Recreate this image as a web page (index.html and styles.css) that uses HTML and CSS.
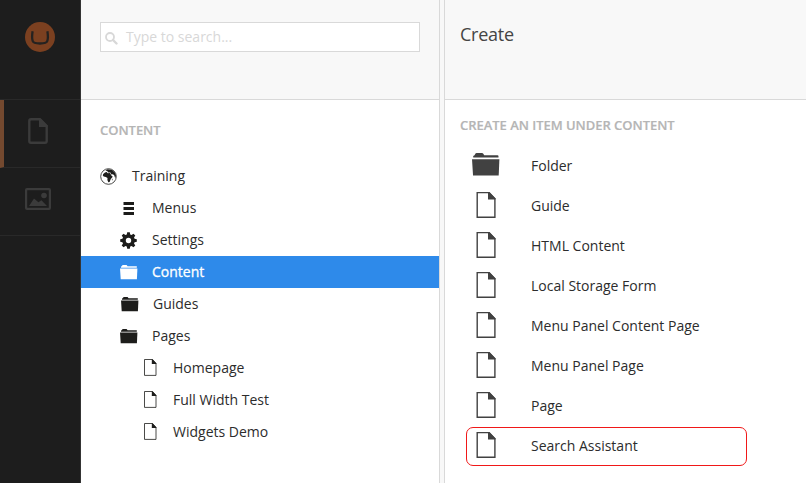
FILE: index.html
```html
<!DOCTYPE html>
<html lang="en">
<head>
<meta charset="utf-8">
<title>Content</title>
<link rel="stylesheet" href="styles.css">
</head>
<body>
<svg class="defs" aria-hidden="true">
  <symbol id="doc-large" viewBox="0 0 20 26"><path d="M1.2.6H12.8L18.9 6.7V25.3H1.2Z" fill="none" stroke="currentColor" stroke-width="1.4"/><path d="M12 0h1.5L19.4 6.2V7.5H12Z" fill="currentColor"/></symbol>
  <symbol id="doc-small" viewBox="0 0 13 17"><path d="M.5.5H8.4L12 4.4V16.4H.5Z" fill="none" stroke="currentColor" stroke-width=".8"/><path d="M7.8.2H8.6L12.3 4.2V5H7.8Z" fill="currentColor"/></symbol>
  <symbol id="folder" viewBox="0 0 28 23"><path d="M1.2 4.5V3L2.5 2.2 3.5.5Q3.8 0 4.5 0H10Q10.8 0 11.1.5L12.2 2.3H25.5Q26.5 2.3 26.5 3.5V4.5Z"/><path d="M0 6.3H27.4L26.7 22.6H1Z"/></symbol>
  <symbol id="folder-small" viewBox="0 0 18 15"><path d="M1 2.7V1.7L1.8 1 2.4.3Q2.7 0 3 0H6.6L7.6 1.2H16.8V2.7Z"/><path d="M0 3.6H17.4L16.9 14.3H.7Z"/></symbol>
</svg>
<div class="app">
  <nav class="rail">
    <div class="rail-logo">
      <svg width="30" height="30" viewBox="0 0 30 30"><circle cx="15" cy="15" r="15" fill="#7b4020"/><path d="M7.6 9.2C6.9 13.5 7 17 7.7 19C8.4 21.2 10.5 21.5 15 21.5S21.6 21.2 22.3 19C23 17 23.1 13.5 22.4 9.2" fill="none" stroke="#252220" stroke-width="2.3"/></svg>
    </div>
    <a class="rail-item rail-item-active">
      <svg width="20" height="26" viewBox="0 0 20 26"><path d="M3 1.3H12L18.7 8V23Q18.7 24.7 17 24.7H3Q1.3 24.7 1.3 23V3Q1.3 1.3 3 1.3Z" fill="none" stroke="currentColor" stroke-width="2.4"/><path d="M11 1H13L19.5 7.5V9H11Z" fill="currentColor"/></svg>
    </a>
    <a class="rail-item rail-item-media">
      <svg width="26" height="22" viewBox="0 0 26 22"><rect x="1.1" y="1.1" width="23.8" height="19.8" rx=".8" fill="none" stroke="currentColor" stroke-width="2.2"/><circle cx="19" cy="7.5" r="2.8" fill="currentColor"/><path d="M4 18L9 10.5 13.4 14.2 16.4 12.3 22 18Z" fill="currentColor"/></svg>
    </a>
  </nav>
  <section class="tree-panel">
    <header class="panel-header">
      <label class="search">
        <svg width="13" height="13" viewBox="0 0 13 13"><circle cx="5" cy="5" r="4" fill="none" stroke="currentColor" stroke-width="1.8"/><path d="M8 8L11.5 11.5" stroke="currentColor" stroke-width="2.4" stroke-linecap="round"/></svg>
        <span>Type to search...</span>
      </label>
    </header>
    <h2 class="tree-title">CONTENT</h2>
    <ul class="tree">
      <li class="node level-0"><span class="node-icon"><svg width="17" height="17" viewBox="0 0 17 17"><circle cx="8.5" cy="8.5" r="7.8" fill="none" stroke="currentColor" stroke-width=".8"/><path d="M3.2 5.9L5 4.4 6.6 4.1 7.8 5.3 10 5.1 11.2 7.2 12.2 8.4 13 8.5 10.8 11 9.6 13.9 8.3 14.2 7.4 11.9 7.5 9.9 5.8 8.9 3.7 8.6 2.8 7.5Z"/><path d="M5.3 2.6L7.8 1.2 12.2 1.9 15 4.7 16 7.8 15.2 10.2 14.2 7.3 12.9 6.2 11.4 6.4 10.4 4.4 8.3 4.4 7.2 3.1Z"/><path d="M11.8 11.5L12.7 10.6 12.3 12.7Z"/></svg></span>Training</li>
      <li class="node level-1"><span class="node-icon"><svg width="17" height="17" viewBox="0 0 17 17"><path d="M3.5 2h10.5v3h-10.5zM3.5 7h10.5v3h-10.5zM3.5 12h10.5v3h-10.5z"/></svg></span>Menus</li>
      <li class="node level-1"><span class="node-icon"><svg width="17" height="17" viewBox="0 0 17 17"><path fill-rule="evenodd" d="M7.2.2h2.6l.4 2.2 1.4.6 1.8-1.3 1.9 1.9L14 5.4l.6 1.4 2.2.4v2.6l-2.2.4-.6 1.4 1.3 1.8-1.9 1.9-1.8-1.3-1.4.6-.4 2.2H7.2l-.4-2.2L5.4 14l-1.8 1.3-1.9-1.9L3 11.6l-.6-1.4L.2 9.8V7.2l2.2-.4L3 5.4 1.7 3.6l1.9-1.9L5.4 3l1.4-.6zM8.5 5.8a2.7 2.7 0 1 0 0 5.4 2.7 2.7 0 1 0 0-5.4z"/></svg></span>Settings</li>
      <li class="node level-1 selected"><span class="node-icon"><svg width="18" height="15"><use href="#folder-small"/></svg></span>Content</li>
      <li class="node level-1 guides"><span class="node-icon"><svg width="18" height="15"><use href="#folder-small"/></svg></span>Guides</li>
      <li class="node level-1"><span class="node-icon"><svg width="18" height="15"><use href="#folder-small"/></svg></span>Pages</li>
      <li class="node level-2"><span class="node-icon"><svg width="13" height="17"><use href="#doc-small"/></svg></span>Homepage</li>
      <li class="node level-2"><span class="node-icon"><svg width="13" height="17"><use href="#doc-small"/></svg></span>Full Width Test</li>
      <li class="node level-2"><span class="node-icon"><svg width="13" height="17"><use href="#doc-small"/></svg></span>Widgets Demo</li>
    </ul>
  </section>
  <section class="create-panel">
    <header class="panel-header"><h1 class="create-title">Create</h1></header>
    <h2 class="create-subtitle">CREATE AN ITEM UNDER CONTENT</h2>
    <ul class="types">
      <li class="type"><span class="type-icon"><svg width="28" height="23"><use href="#folder"/></svg></span>Folder</li>
      <li class="type"><span class="type-icon"><svg width="20" height="26"><use href="#doc-large"/></svg></span>Guide</li>
      <li class="type"><span class="type-icon"><svg width="20" height="26"><use href="#doc-large"/></svg></span>HTML Content</li>
      <li class="type"><span class="type-icon"><svg width="20" height="26"><use href="#doc-large"/></svg></span>Local Storage Form</li>
      <li class="type"><span class="type-icon"><svg width="20" height="26"><use href="#doc-large"/></svg></span>Menu Panel Content Page</li>
      <li class="type"><span class="type-icon"><svg width="20" height="26"><use href="#doc-large"/></svg></span>Menu Panel Page</li>
      <li class="type"><span class="type-icon"><svg width="20" height="26"><use href="#doc-large"/></svg></span>Page</li>
      <li class="type highlighted"><span class="type-icon"><svg width="20" height="26"><use href="#doc-large"/></svg></span>Search Assistant</li>
    </ul>
  </section>
</div>
</body>
</html>
```
FILE: styles.css
```css
* { box-sizing: border-box; }
body { margin: 0; background: #f8f8f8; font: 14px/20px "Open Sans", sans-serif; color: #2c2c2c; }
h1, h2, ul { margin: 0; padding: 0; font-weight: 400; }
ul { list-style: none; }
svg { display: block; fill: currentColor; flex: none; }
.defs { display: none; }
.app { display: flex; height: 483px; overflow: hidden; }

.rail { width: 81px; flex: none; background: #1d1d1d; border-right: 1px solid #343434; }
.rail-logo { height: 100px; padding: 22px 0 0 25px; border-bottom: 1px solid #292929; }
.rail-item { display: flex; height: 68px; padding: 18px 0 0 25px; border-bottom: 1px solid #292929; color: #3b3b3b; }
.rail-item-active { padding-left: 24px; border-left: 4px solid #74492f; }
.rail-item-media { padding-top: 20px; }

.tree-panel { width: 359px; flex: none; background: #fff; border-right: 1px solid #d9d9d9; }
.panel-header { height: 100px; background: #f8f8f8; border-bottom: 1px solid #d9d9d9; }
.tree-panel .panel-header { padding: 22px 19px 0; }
.search { display: flex; align-items: center; gap: 8px; height: 30px; padding-left: 4px; background: #fff; border: 1px solid #d9d9d9; color: #d8d8d8; }
.search svg { margin-top: 2px; }
.tree-title, .create-subtitle { font-size: 13px; font-weight: 600; color: #b5b5b5; letter-spacing: -.03px; -webkit-text-stroke: .2px #b5b5b5; }
.tree-title { padding: 20px 0 0 19px; height: 60px; }

.node { display: flex; align-items: center; height: 32px; }
.node-icon { display: flex; width: 18px; margin-right: 14px; color: #1d1d1b; }
.level-0 { padding-left: 19px; }
.level-1 { padding-left: 39px; }
.level-2 { padding-left: 60px; }
.level-2 .node-icon { padding-left: 3px; }
.level-2 svg { margin-top: -1px; }
.guides { padding-left: 40px; }
.selected { background: #2e8aea; color: #fff; -webkit-text-stroke: .3px #fff; }
.selected .node-icon { color: #fff; }

.create-panel { flex: 1; margin-left: 4px; background: #fff; border-left: 1px solid #d9d9d9; }
.create-title { padding: 22px 0 0 15px; font-size: 18px; line-height: 25px; letter-spacing: -.25px; color: #444; }
.create-subtitle { padding: 15px 0 0 15px; height: 46px; }
.type { display: flex; align-items: center; height: 40px; padding-left: 27px; }
.type-icon { display: flex; justify-content: center; width: 28px; margin-right: 31px; padding-bottom: 2px; color: #414141; }
.type:first-child .type-icon { padding-bottom: 3px; }
.highlighted { width: 281px; height: 39px; margin: 1px 0 0 21px; padding: 0 0 1px 5px; border: 1px solid #f01818; border-radius: 7px; }
```
